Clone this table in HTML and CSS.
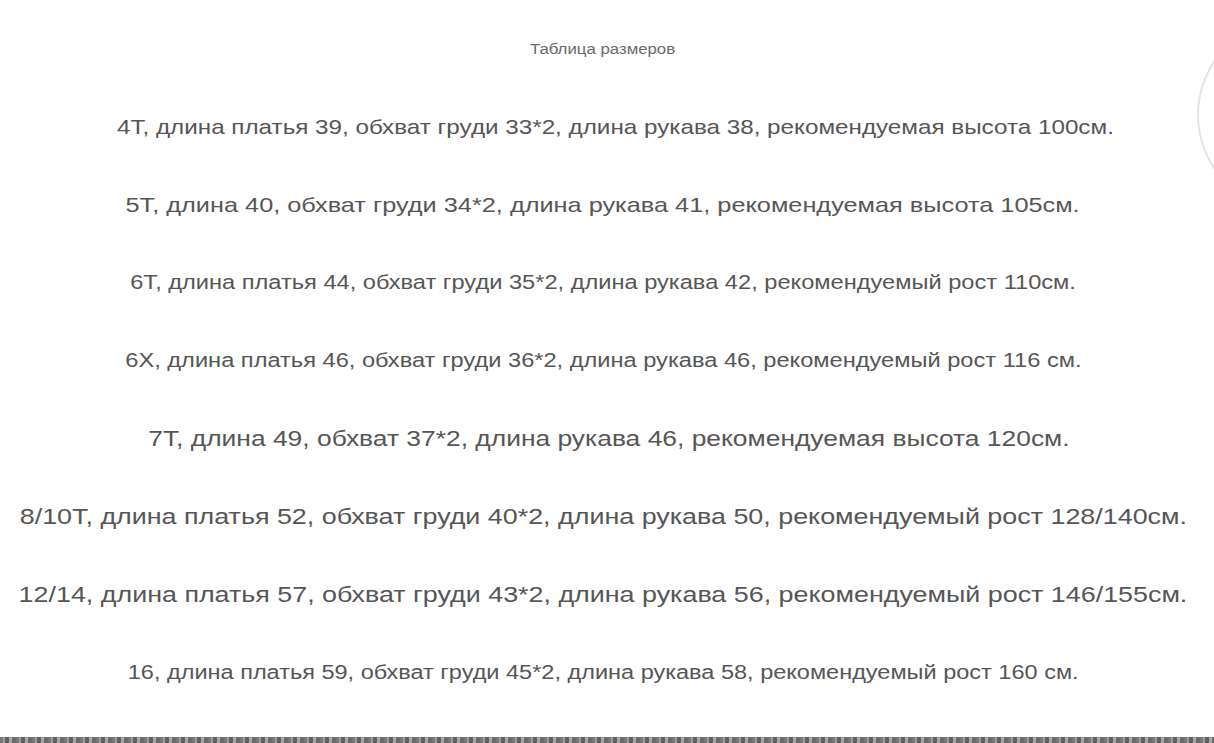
FILE: index.html
```html
<!DOCTYPE html>
<html lang="ru">
<head>
  <meta charset="UTF-8">
  <meta name="viewport" content="width=device-width, initial-scale=1.0">
  <title>Таблица размеров</title>
  <link rel="stylesheet" href="styles.css">
</head>
<body>
  <div class="sheet">
    <div class="ring"></div>
    <h1 class="title"><span class="stretch">Таблица размеров</span></h1>
    <ul class="sizes">
      <li class="size-row row-right"><span class="size size-a">4Т, длина платья 39, обхват груди 33*2, длина рукава 38, рекомендуемая высота 100см.</span></li>
      <li class="size-row"><span class="size size-b">5Т, длина 40, обхват груди 34*2, длина рукава 41, рекомендуемая высота 105см.</span></li>
      <li class="size-row"><span class="size size-c">6Т, длина платья 44, обхват груди 35*2, длина рукава 42, рекомендуемый рост 110см.</span></li>
      <li class="size-row"><span class="size size-c">6X, длина платья 46, обхват груди 36*2, длина рукава 46, рекомендуемый рост 116 см.</span></li>
      <li class="size-row row-nudge"><span class="size size-d">7Т, длина 49, обхват 37*2, длина рукава 46, рекомендуемая высота 120см.</span></li>
      <li class="size-row"><span class="size size-e">8/10Т, длина платья 52, обхват груди 40*2, длина рукава 50, рекомендуемый рост 128/140см.</span></li>
      <li class="size-row"><span class="size size-e">12/14, длина платья 57, обхват груди 43*2, длина рукава 56, рекомендуемый рост 146/155см.</span></li>
      <li class="size-row"><span class="size size-f">16, длина платья 59, обхват груди 45*2, длина рукава 58, рекомендуемый рост 160 см.</span></li>
    </ul>
    <div class="film"></div>
  </div>
</body>
</html>
```

FILE: styles.css
```css
html, body {
  margin: 0;
  padding: 0;
  background: #fff;
}

body {
  font-family: "Liberation Sans", Arial, sans-serif;
  color: #565656;
  overflow: hidden;
}

.sheet {
  position: relative;
  width: 1214px;
  height: 743px;
  display: flex;
  flex-direction: column;
  overflow: hidden;
}

/* faint circle peeking in at the right edge */
.ring {
  position: absolute;
  left: 1197px;
  top: 18px;
  width: 190px;
  height: 190px;
  border: 2px solid #e4e4e4;
  border-radius: 50%;
}

.title {
  margin: 0;
  height: 88px;
  box-sizing: border-box;
  padding: 41px 8px 0 0;
  text-align: center;
  font-size: 14px;
  font-weight: normal;
  line-height: 16px;
  color: #6a6a6a;
}

/* the scanned chart is a little wider than the font */
.stretch,
.size {
  display: inline-block;
  transform: scaleX(1.2);
}

.sizes {
  list-style: none;
  margin: 0;
  padding: 0 8px 0 0;
  flex: 1;
}

.size-row {
  height: 78px;
  display: flex;
  align-items: center;
  justify-content: center;
  white-space: nowrap;
}

.row-right { padding-left: 24px; }
.row-nudge { padding-left: 12px; }

.size {
  line-height: 1;
}

.size-a { font-size: 20.2px; }
.size-b { font-size: 21.1px; }
.size-c { font-size: 19.7px; }
.size-d { font-size: 22px; }
.size-e { font-size: 22.4px; }
.size-f { font-size: 19.6px; }

/* dark strip along the bottom edge */
.film {
  height: 6px;
  background: repeating-linear-gradient(90deg, #777 0 3px, #9a9a9a 3px 5px, #5e5e5e 5px 9px, #a8a8a8 9px 12px, #6c6c6c 12px 16px);
}
```
